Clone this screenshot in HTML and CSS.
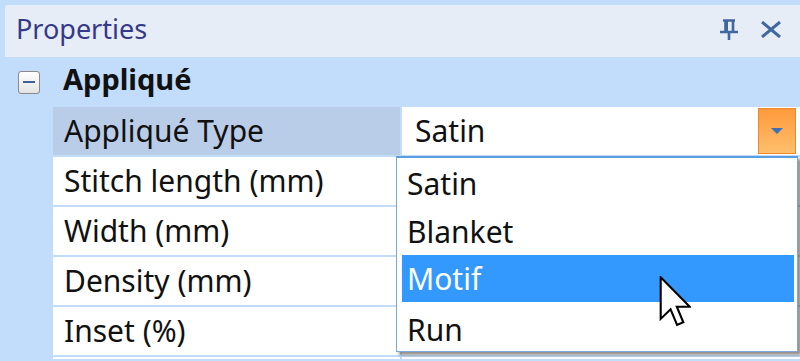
FILE: index.html
```html
<!DOCTYPE html>
<html>
<head>
<meta charset="utf-8">
<link rel="stylesheet" href="styles.css">
</head>
<body>
<div class="panel">
  <div class="titlebar">
    <span class="title">Properties</span>
    <span class="tools">
      <svg class="pin" width="22" height="23" viewBox="0 0 22 23">
        <path d="M5 2.5h12M7.5 2v11M15 2v11M2 14h18M11 14v8" stroke="#41679f" stroke-width="2.6" fill="none"/>
        <path d="M7 3h3v10h-3z" fill="#41679f"/>
      </svg>
      <svg class="close" width="22" height="17" viewBox="0 0 22 17">
        <path d="M2 1l18 15M20 1L2 16" stroke="#41679f" stroke-width="3" fill="none"/>
      </svg>
    </span>
  </div>
  <div class="group">
    <span class="toggle"><span class="minus"></span></span>
    <span class="group-name">Appliqué</span>
  </div>
  <div class="rows">
    <div class="row selected">
      <div class="label">Appliqué Type</div>
      <div class="value">
        <span>Satin</span>
        <span class="drop-btn"><span class="arrow"></span></span>
      </div>
    </div>
    <div class="row">
      <div class="label">Stitch length (mm)</div>
      <div class="value"></div>
    </div>
    <div class="row">
      <div class="label">Width (mm)</div>
      <div class="value"></div>
    </div>
    <div class="row">
      <div class="label">Density (mm)</div>
      <div class="value"></div>
    </div>
    <div class="row">
      <div class="label">Inset (%)</div>
      <div class="value"></div>
    </div>
    <div class="row last">
      <div class="label"></div>
      <div class="value"></div>
    </div>
  </div>
</div>
<ul class="dropdown">
  <li>Satin</li>
  <li>Blanket</li>
  <li class="hover">Motif</li>
  <li>Run</li>
</ul>
<svg class="cursor" width="32" height="52" viewBox="0 0 12 20">
  <path d="M0.5 0.5V16.5L4.3 12.8L6.8 18.8L9.2 17.8L6.7 11.8H11.7Z" fill="#fff" stroke="#000" stroke-width="0.8" stroke-linejoin="miter"/>
</svg>
</body>
</html>
```
FILE: styles.css
```css
html, body {
  margin: 0;
  padding: 0;
  width: 800px;
  height: 361px;
  overflow: hidden;
  background: #c2dcfb;
  font-family: "Noto Sans", "Open Sans", sans-serif;
  font-size: 30px;
  line-height: 30px;
  color: #111;
  position: relative;
}
.panel {
  padding: 5px 0 0 5px;
}
.titlebar {
  height: 52px;
  background: #e7edf6;
  border-radius: 3px 0 0 0;
  display: flex;
  align-items: center;
  justify-content: space-between;
  padding: 0 18px 0 11px;
  box-sizing: border-box;
}
.title {
  color: #36398a;
  font-size: 27px;
  line-height: 28px;
  margin-top: -4px;
}
.tools {
  display: flex;
  align-items: center;
  gap: 20px;
  margin-top: -4px;
}
.group {
  height: 50px;
  display: flex;
  align-items: center;
  margin-left: -5px;
}
.toggle {
  width: 20px;
  height: 21px;
  margin-left: 18px;
  border: 1.5px solid #8a8a8a;
  border-radius: 3px;
  background: linear-gradient(#ffffff, #e4e4e4);
  display: flex;
  align-items: center;
  justify-content: center;
}
.minus {
  width: 12px;
  height: 2px;
  background: #3f5f97;
}
.group-name {
  font-weight: bold;
  font-size: 29px;
  margin-left: 23px;
  margin-top: -6px;
}
.rows {
  margin-left: 48px;
  display: flex;
  flex-direction: column;
  gap: 2px;
}
.row {
  height: 48px;
  display: grid;
  grid-template-columns: 347px 1fr;
  column-gap: 2px;
}
.row.last {
  height: 2px;
}
.label {
  background: #fff;
  padding-left: 11px;
  display: flex;
  align-items: center;
  box-sizing: border-box;
}
.row.selected .label {
  background: #b9cde8;
}
.value {
  background: #fff;
  display: flex;
  align-items: center;
  justify-content: space-between;
  padding-left: 13px;
  box-sizing: border-box;
}
.drop-btn {
  width: 38px;
  height: 46px;
  margin-right: 4px;
  box-sizing: border-box;
  border: 1px solid #ee8a2c;
  background: linear-gradient(#ff9a3c, #ffbf6c);
  display: flex;
  align-items: center;
  justify-content: center;
}
.arrow {
  width: 0;
  height: 0;
  border-left: 6px solid transparent;
  border-right: 6px solid transparent;
  border-top: 6px solid #3c6fb5;
}
.dropdown {
  position: absolute;
  left: 396px;
  top: 156px;
  width: 402px;
  height: 196px;
  margin: 0;
  padding: 2px 3px 0 5px;
  box-sizing: border-box;
  list-style: none;
  background: #fff;
  border: 1.5px solid #7aa8dc;
  border-top: 2px solid #5a9de0;
  box-shadow: 3px 3px 3px rgba(60, 50, 40, 0.55);
}
.dropdown li {
  height: 47px;
  padding-left: 5px;
  display: flex;
  align-items: center;
  margin-bottom: 1px;
}
.dropdown li.hover {
  background: #3399ff;
  color: #fff;
  margin-top: -1px;
  margin-bottom: 4px;
}
.cursor {
  position: absolute;
  left: 659px;
  top: 276px;
}
```
